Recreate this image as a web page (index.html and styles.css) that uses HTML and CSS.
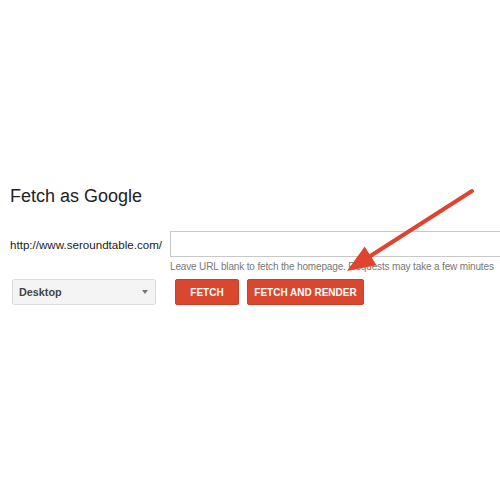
FILE: index.html
```html
<!DOCTYPE html>
<html>
<head>
<meta charset="utf-8">
<link rel="stylesheet" href="styles.css">
</head>
<body>
<div class="page">
  <h1 class="title">Fetch as Google</h1>
  <div class="url-row">
    <span class="url-label">http://www.seroundtable.com/</span>
    <input class="url-input" type="text">
  </div>
  <div class="hint">Leave URL blank to fetch the homepage. Requests may take a few minutes</div>
  <div class="action-row">
    <div class="select"><span class="select-text">Desktop</span><span class="caret"></span></div>
    <div class="buttons">
      <button class="btn btn-fetch">FETCH</button>
      <button class="btn btn-render">FETCH AND RENDER</button>
    </div>
  </div>
</div>
<svg class="annotation" width="500" height="500" viewBox="0 0 500 500">
  <line x1="472" y1="191" x2="368" y2="257.5" stroke="#e0442e" stroke-width="4" stroke-linecap="round"/>
  <polygon points="347,271 364.7,246.6 376.5,265.2" fill="#e0442e"/>
</svg>
</body>
</html>
```
FILE: styles.css
```css
html, body {
  margin: 0;
  padding: 0;
  background: #fff;
}
body {
  width: 500px;
  height: 500px;
  overflow: hidden;
  position: relative;
  font-family: "Liberation Sans", Arial, sans-serif;
}
.page {
  padding: 185px 0 0 10px;
}
.title {
  margin: 0;
  font-size: 18px;
  line-height: 22px;
  font-weight: normal;
  color: #222;
}
.url-row {
  display: flex;
  align-items: center;
  margin-top: 24px;
  height: 26px;
}
.url-label {
  font-size: 11.6px;
  color: #222;
  width: 160px;
  flex: none;
}
.url-input {
  box-sizing: border-box;
  height: 26px;
  width: 340px;
  margin: 0;
  border: 1px solid #c8c8c8;
  border-right: none;
  outline: none;
  flex: none;
}
.hint {
  margin-top: 3px;
  padding-left: 160px;
  font-size: 10px;
  letter-spacing: -0.15px;
  line-height: 13px;
  color: #777;
  white-space: nowrap;
}
.action-row {
  display: flex;
  align-items: center;
  margin-top: 6px;
}
.select {
  box-sizing: border-box;
  margin-left: 2px;
  width: 144px;
  height: 26px;
  background: #f4f4f4;
  border: 1px solid #dcdcdc;
  border-radius: 2px;
  display: flex;
  align-items: center;
  justify-content: space-between;
  padding: 0 6px 0 6px;
}
.select-text {
  font-size: 10.8px;
  font-weight: bold;
  color: #444;
}
.caret {
  width: 0;
  height: 0;
  border-left: 3.5px solid transparent;
  border-right: 3.5px solid transparent;
  border-top: 4px solid #777;
  margin-right: 1px;
}
.buttons {
  display: flex;
  gap: 8px;
  margin-left: 19px;
}
.btn {
  box-sizing: border-box;
  height: 26px;
  padding: 0;
  background: #d9472f;
  border: 1px solid #c8412c;
  border-radius: 2px;
  color: #fff;
  font-family: "Liberation Sans", Arial, sans-serif;
  font-size: 10px;
  font-weight: bold;
  margin: 0;
  white-space: nowrap;
  text-align: center;
}
.btn-fetch {
  width: 64px;
}
.btn-render {
  width: 117px;
}
.annotation {
  position: absolute;
  top: 0;
  left: 0;
  pointer-events: none;
}
```
